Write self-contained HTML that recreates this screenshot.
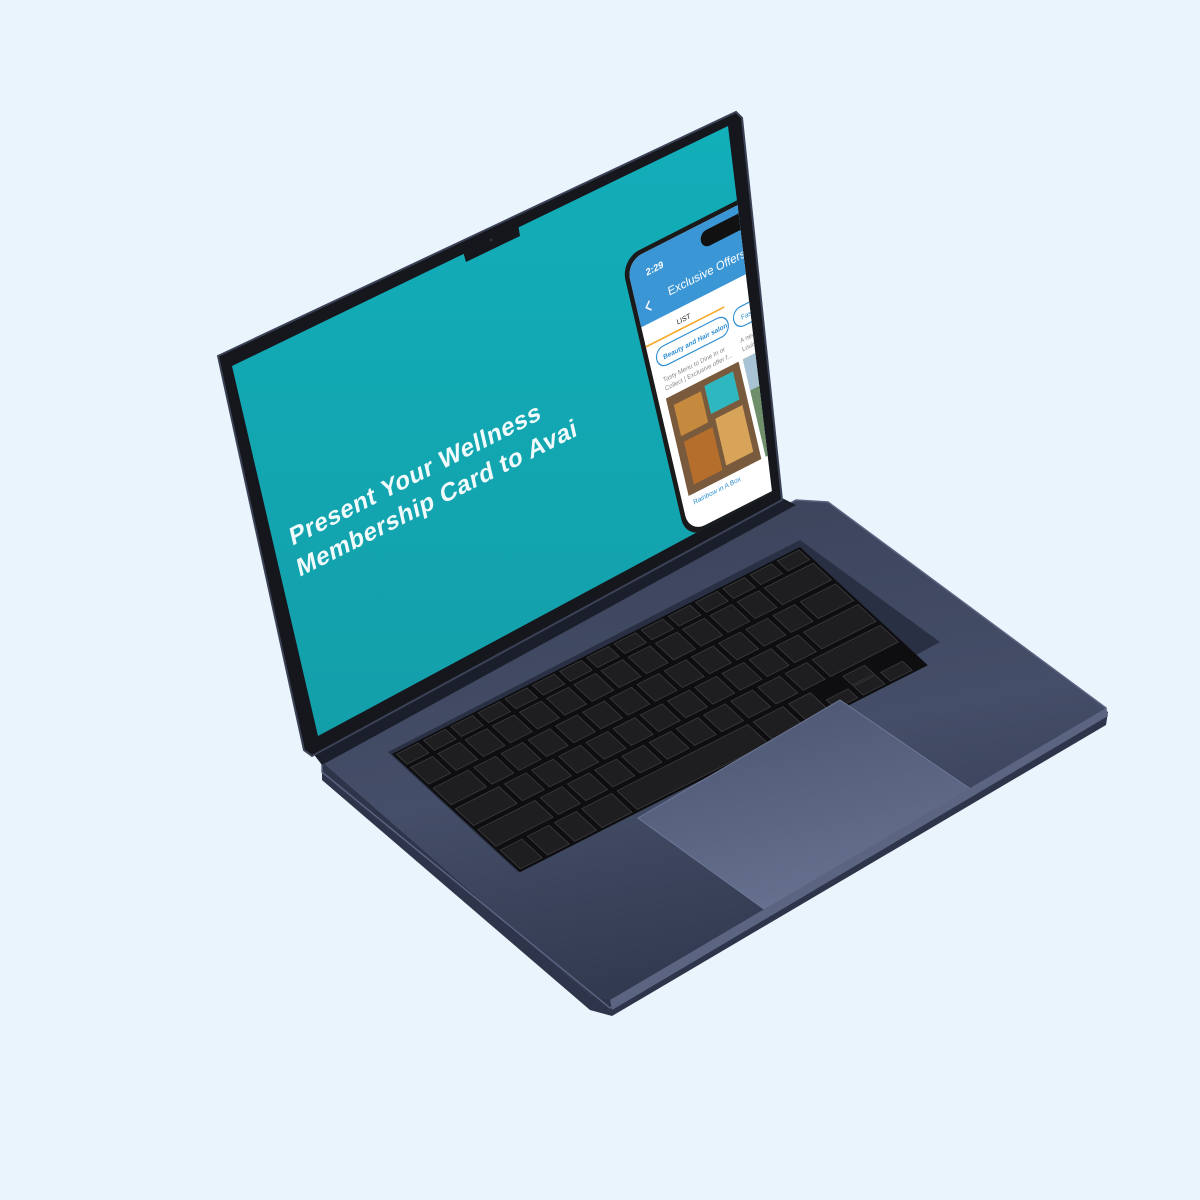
<!DOCTYPE html>
<html><head><meta charset="utf-8"><style>
html,body{margin:0;padding:0;background:#EAF4FD;}
svg{display:block;}
</style></head><body>
<svg width="1200" height="1200" viewBox="0 0 1200 1200" xmlns="http://www.w3.org/2000/svg">
<defs>
<linearGradient id="base" x1="0" y1="0" x2="0.3" y2="1">
<stop offset="0" stop-color="#3A4259"/><stop offset="0.6" stop-color="#454E68"/><stop offset="1" stop-color="#323A50"/>
</linearGradient>
<linearGradient id="tp" x1="0" y1="0" x2="0.4" y2="1">
<stop offset="0" stop-color="#4A5470"/><stop offset="1" stop-color="#66718F"/>
</linearGradient>
<linearGradient id="scr" x1="0" y1="0" x2="0" y2="1">
<stop offset="0" stop-color="#12AEB9"/><stop offset="1" stop-color="#139FAA"/>
</linearGradient>
<clipPath id="sc"><polygon points="232,366 728,126 772,492 318,736"/></clipPath>
</defs>
<polygon points="322,765 796,503 830,505 1108,712 1106,725 612,1016 590,1010 322,780" fill="#2E354A"/>
<polygon points="322,762 796,500 828,502 1106,708 610,1000 590,996" fill="url(#base)"/>
<polygon points="322,762 796,500 828,502 1106,708 1106,716 610,1008 322,772" fill="none" stroke="#5A6380" stroke-width="1.5"/>
<polygon points="388,752 800,540 940,642 518,872" fill="#2A3044"/>
<g transform="matrix(27.2,-13.8,21.3,19.7,392,754)">
<rect x="0" y="0" width="15" height="6" fill="#0E0E10"/>
<g fill="#1E1E20" stroke="#3a3a3e" stroke-width="0.03">
<g><rect x="0.1" y="0.08" width="0.8" height="0.5"/><rect x="1.1" y="0.08" width="0.8" height="0.5"/><rect x="2.1" y="0.08" width="0.8" height="0.5"/><rect x="3.1" y="0.08" width="0.8" height="0.5"/><rect x="4.1" y="0.08" width="0.8" height="0.5"/><rect x="5.1" y="0.08" width="0.8" height="0.5"/><rect x="6.1" y="0.08" width="0.8" height="0.5"/><rect x="7.1" y="0.08" width="0.8" height="0.5"/><rect x="8.1" y="0.08" width="0.8" height="0.5"/><rect x="9.1" y="0.08" width="0.8" height="0.5"/><rect x="10.1" y="0.08" width="0.8" height="0.5"/><rect x="11.1" y="0.08" width="0.8" height="0.5"/><rect x="12.1" y="0.08" width="0.8" height="0.5"/><rect x="13.1" y="0.08" width="0.8" height="0.5"/><rect x="14.1" y="0.08" width="0.8" height="0.5"/></g>
<g><rect x="0.1" y="0.75" width="0.8" height="0.85"/><rect x="1.1" y="0.75" width="0.8" height="0.85"/><rect x="2.1" y="0.75" width="0.8" height="0.85"/><rect x="3.1" y="0.75" width="0.8" height="0.85"/><rect x="4.1" y="0.75" width="0.8" height="0.85"/><rect x="5.1" y="0.75" width="0.8" height="0.85"/><rect x="6.1" y="0.75" width="0.8" height="0.85"/><rect x="7.1" y="0.75" width="0.8" height="0.85"/><rect x="8.1" y="0.75" width="0.8" height="0.85"/><rect x="9.1" y="0.75" width="0.8" height="0.85"/><rect x="10.1" y="0.75" width="0.8" height="0.85"/><rect x="11.1" y="0.75" width="0.8" height="0.85"/><rect x="12.1" y="0.75" width="0.8" height="0.85"/><rect x="13.1" y="0.75" width="1.8" height="0.85"/></g>
<g><rect x="0.1" y="1.8" width="1.3" height="0.85"/><rect x="1.6" y="1.8" width="0.8" height="0.85"/><rect x="2.6" y="1.8" width="0.8" height="0.85"/><rect x="3.6" y="1.8" width="0.8" height="0.85"/><rect x="4.6" y="1.8" width="0.8" height="0.85"/><rect x="5.6" y="1.8" width="0.8" height="0.85"/><rect x="6.6" y="1.8" width="0.8" height="0.85"/><rect x="7.6" y="1.8" width="0.8" height="0.85"/><rect x="8.6" y="1.8" width="0.8" height="0.85"/><rect x="9.6" y="1.8" width="0.8" height="0.85"/><rect x="10.6" y="1.8" width="0.8" height="0.85"/><rect x="11.6" y="1.8" width="0.8" height="0.85"/><rect x="12.6" y="1.8" width="0.8" height="0.85"/><rect x="13.6" y="1.8" width="1.3" height="0.85"/></g>
<g><rect x="0.1" y="2.85" width="1.6" height="0.85"/><rect x="1.9" y="2.85" width="0.8" height="0.85"/><rect x="2.9" y="2.85" width="0.8" height="0.85"/><rect x="3.9" y="2.85" width="0.8" height="0.85"/><rect x="4.9" y="2.85" width="0.8" height="0.85"/><rect x="5.9" y="2.85" width="0.8" height="0.85"/><rect x="6.9" y="2.85" width="0.8" height="0.85"/><rect x="7.9" y="2.85" width="0.8" height="0.85"/><rect x="8.9" y="2.85" width="0.8" height="0.85"/><rect x="9.9" y="2.85" width="0.8" height="0.85"/><rect x="10.9" y="2.85" width="0.8" height="0.85"/><rect x="11.9" y="2.85" width="0.8" height="0.85"/><rect x="12.9" y="2.85" width="2.0" height="0.85"/></g>
<g><rect x="0.1" y="3.9" width="2.1" height="0.85"/><rect x="2.4" y="3.9" width="0.8" height="0.85"/><rect x="3.4" y="3.9" width="0.8" height="0.85"/><rect x="4.4" y="3.9" width="0.8" height="0.85"/><rect x="5.4" y="3.9" width="0.8" height="0.85"/><rect x="6.4" y="3.9" width="0.8" height="0.85"/><rect x="7.4" y="3.9" width="0.8" height="0.85"/><rect x="8.4" y="3.9" width="0.8" height="0.85"/><rect x="9.4" y="3.9" width="0.8" height="0.85"/><rect x="10.4" y="3.9" width="0.8" height="0.85"/><rect x="11.4" y="3.9" width="0.8" height="0.85"/><rect x="12.4" y="3.9" width="2.5" height="0.85"/></g>
<g><rect x="0.1" y="4.95" width="0.8" height="0.95"/><rect x="1.1" y="4.95" width="0.8" height="0.95"/><rect x="2.1" y="4.95" width="0.8" height="0.95"/><rect x="3.1" y="4.95" width="1.1" height="0.95"/><rect x="4.4" y="4.95" width="4.8" height="0.95"/><rect x="9.4" y="4.95" width="1.1" height="0.95"/><rect x="10.7" y="4.95" width="0.8" height="0.95"/><rect x="11.7" y="5.45" width="0.8" height="0.45"/><rect x="12.7" y="4.95" width="0.8" height="0.45"/><rect x="12.7" y="5.45" width="0.8" height="0.45"/><rect x="13.7" y="5.45" width="0.8" height="0.45"/></g>
</g>
</g>
<polygon points="638,818 840,700 972,790 768,912" fill="url(#tp)" stroke="#6E7896" stroke-width="1"/>
<polygon points="610,1000 1106,708 1108,716 612,1010" fill="#5B6582"/>
<polygon points="312,752 782,498 796,505 322,765" fill="#1B1F2B"/>
<polygon points="218,356 736,112 742,118 782,500 312,756 304,750" fill="#15171D"/>
<polygon points="218,356 736,112 742,118 782,500 312,756 304,750" fill="none" stroke="#3B4256" stroke-width="2"/>
<polygon points="232,366 728,126 772,492 318,736" fill="url(#scr)"/>
<g clip-path="url(#sc)">
<g transform="matrix(0.713,-0.363,0.182,0.779,626,262)">
<rect x="-6" y="-6" width="230" height="360" rx="26" fill="#1a1a1a"/>
<rect x="0" y="0" width="218" height="348" rx="22" fill="#fff"/>
<path d="M22,0 H196 A22,22 0 0 1 218,22 V84 H0 V22 A22,22 0 0 1 22,0Z" fill="#3B96D6"/>
<rect x="100" y="10" width="70" height="20" rx="10" fill="#111"/>
<text x="22" y="28" font-family="Liberation Sans,sans-serif" font-size="12" fill="#fff" font-weight="bold">2:29</text>
<text x="44" y="64" font-family="Liberation Sans,sans-serif" font-size="15" fill="#fff">Exclusive Offers</text>
<path d="M18,58 l-6,6 6,6" stroke="#fff" stroke-width="2" fill="none"/>
<text x="46" y="102" font-family="Liberation Sans,sans-serif" font-size="9" fill="#222">LIST</text>
<rect x="0" y="108" width="110" height="2" fill="#F5A623"/>
<rect x="10" y="118" width="100" height="24" rx="12" fill="#fff" stroke="#2E8FD2" stroke-width="1.5"/>
<text x="19" y="134" font-family="Liberation Sans,sans-serif" font-size="8.5" fill="#2E8FD2" font-weight="bold">Beauty and Hair salon</text>
<rect x="118" y="118" width="60" height="24" rx="12" fill="#fff" stroke="#2E8FD2" stroke-width="1.5"/>
<text x="128" y="134" font-family="Liberation Sans,sans-serif" font-size="8.5" fill="#2E8FD2">Fashion</text>
<text x="12" y="160" font-family="Liberation Sans,sans-serif" font-size="8" fill="#888">Tasty Menu to Dine In or</text>
<text x="12" y="171" font-family="Liberation Sans,sans-serif" font-size="8" fill="#888">Collect | Exclusive offer f...</text>
<text x="120" y="160" font-family="Liberation Sans,sans-serif" font-size="8" fill="#888">A new al</text>
<text x="120" y="171" font-family="Liberation Sans,sans-serif" font-size="8" fill="#888">Louis for</text>
<rect x="10" y="180" width="102" height="125" fill="#7A5A3C"/>
<rect x="18" y="192" width="38" height="40" fill="#C58A3E"/><rect x="62" y="188" width="40" height="36" fill="#2FB7C0"/>
<rect x="20" y="240" width="40" height="55" fill="#B56E2B"/><rect x="66" y="232" width="38" height="60" fill="#D8A45A"/>
<rect x="118" y="180" width="100" height="125" fill="#6E8F6A"/>
<rect x="118" y="180" width="100" height="40" fill="#A9C3D6"/>
<text x="14" y="318" font-family="Liberation Sans,sans-serif" font-size="8.5" fill="#2E8FD2">Rainbow in A Box</text>
<text x="122" y="318" font-family="Liberation Sans,sans-serif" font-size="8.5" fill="#2E8FD2">Côte D'O</text>
</g>
<g transform="matrix(0.891,-0.454,0.227,0.974,292,546)" font-family="Liberation Sans,sans-serif" font-weight="bold" fill="#F2FBFB" font-size="25" letter-spacing="0.6">
<text x="0" y="0">Present Your Wellness</text>
<text x="0" y="32">Membership Card to Avai</text>
</g>
</g>
<polygon points="462,248 518,224 520,236 466,262" fill="#15171D"/>
<circle cx="491" cy="240" r="1.5" fill="#333"/>
</svg>
</body></html>
